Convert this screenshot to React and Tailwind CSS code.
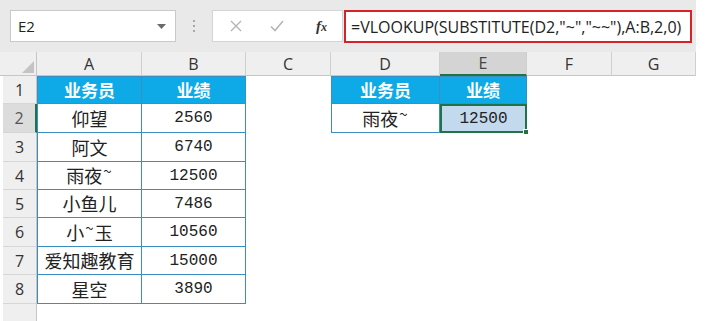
import React from "react";

const cjk = { fontFamily: '"Noto Sans CJK SC", sans-serif' };
const mono = { fontFamily: '"Liberation Mono", monospace' };
const ui = { fontFamily: '"Open Sans", "Noto Sans", sans-serif' };

const cols = [
  { k: "A", w: "w-[105px]" },
  { k: "B", w: "w-[104px]" },
  { k: "C", w: "w-[85px]" },
  { k: "D", w: "w-[109px]" },
  { k: "E", w: "w-[87px]" },
  { k: "F", w: "w-[85px]" },
  { k: "G", w: "w-[84px]" },
];

const data = [
  ["仰望", "2560"],
  ["阿文", "6740"],
  ["雨夜~", "12500"],
  ["小鱼儿", "7486"],
  ["小~玉", "10560"],
  ["爱知趣教育", "15000"],
  ["星空", "3890"],
];

const heights = ["h-[28px]", "h-[29px]", "h-[29px]", "h-[28px]", "h-[28px]", "h-[29px]", "h-[28px]", "h-[29px]"];

function Name({ t }) {
  const parts = t.split("~");
  if (parts.length === 1) return <span>{t}</span>;
  return (
    <span>
      {parts[0]}
      <span className="relative top-[-6px] text-[15px] mx-[1px]">~</span>
      {parts[1]}
    </span>
  );
}

function RowHead({ n, sel, h }) {
  return (
    <div className={`flex ${h}`}>
      <div className="w-[3px] bg-white" />
      <div
        className={`w-[34px] flex items-center justify-center border-b border-[#d6d6d6] text-[16px] ${
          sel ? "bg-[#dcdcdc] border-r-2 border-r-[#217346] text-[#555]" : "bg-[#efefef] border-r border-r-[#c6c6c6] text-[#333]"
        }`}
        style={ui}
      >
        {n}
      </div>
    </div>
  );
}

export default function App() {
  const tableBorder = "border-[#3a8ec2]";
  return (
    <div className="w-[714px] h-[321px] bg-white overflow-hidden">
      <div className="w-[696px]">
        {/* top bar */}
        <div className="flex h-[52px] bg-[#e9e9e9] pt-[10px] items-start">
          <div className="ml-[10px] w-[166px] h-[32px] bg-white border border-[#c9c9c9] flex items-center justify-between pl-[7px] pr-[9px]">
            <span className="text-[15px] text-[#222]" style={ui}>E2</span>
            <svg width="9" height="5" viewBox="0 0 9 5"><path d="M0 0h9L4.5 5z" fill="#6b6b6b" /></svg>
          </div>
          <div className="w-[36px] h-[32px] flex flex-col items-center justify-center gap-[3px]">
            <div className="w-[2px] h-[2px] bg-[#a8a8a8]" />
            <div className="w-[2px] h-[2px] bg-[#a8a8a8]" />
            <div className="w-[2px] h-[2px] bg-[#a8a8a8]" />
          </div>
          <div className="w-[131px] h-[32px] bg-white border border-[#d4d4d4] flex items-center">
            <div className="w-[46px] flex justify-center">
              <svg width="12" height="12" viewBox="0 0 12 12"><path d="M1 1l10 10M11 1L1 11" stroke="#b5b5b5" strokeWidth="1.4" /></svg>
            </div>
            <div className="w-[36px] flex justify-center">
              <svg width="14" height="12" viewBox="0 0 14 12"><path d="M1 6.5l4 4L13 1" stroke="#b5b5b5" strokeWidth="1.6" fill="none" /></svg>
            </div>
            <div className="flex-1 flex justify-center pl-[6px]">
              <span className="italic font-bold text-[15px] text-[#333]" style={{ fontFamily: '"Liberation Serif", serif' }}>
                f<span className="text-[12px]">x</span>
              </span>
            </div>
          </div>
          <div className="ml-[1px] w-[348px] h-[33px] bg-white border-2 border-[#d5232a] flex items-center pl-[5px]">
            <span className="text-[16px] text-[#222] whitespace-nowrap" style={ui}>
              =VLOOKUP(SUBSTITUTE(D2,"~","~~"),A:B,2,0)
            </span>
          </div>
        </div>

        <div className="flex">
          {/* row header column */}
          <div className="flex flex-col">
            <div className="w-[37px] h-[24px] bg-[#efefef] border-r border-b border-[#c6c6c6] flex items-end justify-end pr-[2px] pb-[2px]">
              <svg width="12" height="12" viewBox="0 0 12 12"><path d="M12 0v12H0z" fill="#c4c4c4" /></svg>
            </div>
            {heights.map((h, i) => (
              <RowHead key={i} n={i + 1} sel={i === 1} h={h} />
            ))}
            <RowHead n="" h="h-[28px]" />
          </div>

          {/* main grid */}
          <div className="flex flex-col">
            <div className="flex h-[24px]">
              {cols.map((c) => (
                <div
                  key={c.k}
                  className={`${c.w} flex items-center justify-center text-[16px] border-r border-r-[#cfcfcf] ${
                    c.k === "E" ? "bg-[#d4d4d4] border-b-2 border-b-[#217346] text-[#444]" : "bg-[#efefef] border-b border-b-[#c6c6c6] text-[#333]"
                  }`}
                  style={ui}
                >
                  {c.k}
                </div>
              ))}
            </div>

            <div className="flex">
              {/* table A:B */}
              <div className="flex flex-col">
                <div className={`flex ${heights[0]}`}>
                  <div className={`w-[105px] bg-[#0eaae8] border ${tableBorder} flex items-center justify-center text-white font-bold text-[17px]`} style={cjk}>业务员</div>
                  <div className={`w-[104px] bg-[#0eaae8] border-t border-r border-b ${tableBorder} flex items-center justify-center text-white font-bold text-[17px]`} style={cjk}>业绩</div>
                </div>
                {data.map((r, i) => (
                  <div key={i} className={`flex ${heights[i + 1]}`}>
                    <div className={`w-[105px] border-l border-r border-b ${tableBorder} flex items-center justify-center text-[18px] text-[#222]`} style={cjk}>
                      <Name t={r[0]} />
                    </div>
                    <div className={`w-[104px] border-r border-b ${tableBorder} flex items-center justify-center text-[16px] text-[#222]`} style={mono}>
                      {r[1]}
                    </div>
                  </div>
                ))}
              </div>

              {/* column C spacer */}
              <div className="w-[85px]" />

              {/* table D:E */}
              <div className="flex flex-col">
                <div className={`flex ${heights[0]}`}>
                  <div className={`w-[109px] bg-[#0eaae8] border ${tableBorder} flex items-center justify-center text-white font-bold text-[17px]`} style={cjk}>业务员</div>
                  <div className={`w-[87px] bg-[#0eaae8] border-t border-r border-b ${tableBorder} flex items-center justify-center text-white font-bold text-[17px]`} style={cjk}>业绩</div>
                </div>
                <div className={`flex ${heights[1]}`}>
                  <div className={`w-[109px] border-l border-r border-b ${tableBorder} flex items-center justify-center text-[18px] text-[#222]`} style={cjk}>
                    <Name t="雨夜~" />
                  </div>
                  <div className="relative w-[87px] bg-[#c2d9ee] border-2 border-[#217346] flex items-center justify-center text-[16px] text-[#222]" style={mono}>
                    12500
                    <div className="absolute right-[-4px] bottom-[-4px] w-[6px] h-[6px] bg-[#217346] border border-white" />
                  </div>
                </div>
              </div>
            </div>
          </div>
        </div>
      </div>
    </div>
  );
}
